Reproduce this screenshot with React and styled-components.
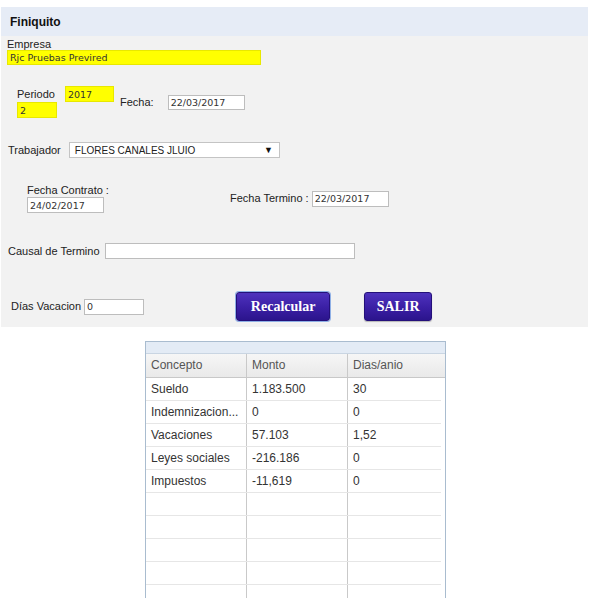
import React from "react";
import styled, { createGlobalStyle } from "styled-components";

const Global = createGlobalStyle`
  html, body { margin: 0; padding: 0; overflow: hidden; background: #fff; }
  body { font-family: "Liberation Sans", Arial, sans-serif; }
`;

const Page = styled.div`
  padding: 7px 0 0 1px;
  width: 592px;
  height: 598px;
  box-sizing: border-box;
`;

const Panel = styled.div`
  width: 587px;
  background: #f2f2f2;
  padding-bottom: 6px;
  font-size: 11px;
  color: #222;
`;

const Header = styled.div`
  height: 29px;
  display: flex;
  align-items: center;
  padding-left: 9px;
  background: #e6ecf6;
  font-weight: bold;
  font-size: 12px;
  color: #111;
`;

const Label = styled.span`
  font-size: 11px;
  line-height: ${(p) => p.$lh || 13}px;
  color: #222;
  white-space: nowrap;
  margin-left: ${(p) => p.$ml || 0}px;
  margin-right: ${(p) => p.$mr || 0}px;
  display: block;
`;

const Field = styled.input`
  box-sizing: border-box;
  width: ${(p) => p.$w}px;
  height: ${(p) => p.$h || 15}px;
  margin: 0;
  padding: 0 2px;
  border: 1px solid ${(p) => (p.$yellow ? "#e8e800" : "#bdbdbd")};
  background: ${(p) => (p.$yellow ? "#ffff00" : "#fff")};
  font-family: "DejaVu Sans", Verdana, sans-serif;
  font-size: 9.5px;
  color: #333;
  outline: none;
  display: block;
  flex: none;
`;

const EmpresaBlock = styled.div`
  margin: 2px 0 0 6px;
`;

const Row = styled.div`
  display: flex;
  align-items: center;
  margin-top: ${(p) => p.$mt || 0}px;
  padding-left: ${(p) => p.$pl || 0}px;
`;

const PeriodoBox = styled.div`
  display: flex;
  flex-direction: column;
  width: 98px;
  margin-right: 5px;
`;

const Line = styled.div`
  display: flex;
  align-items: center;
  gap: ${(p) => p.$gap || 0}px;
`;

const Select = styled.div`
  box-sizing: border-box;
  width: 211px;
  height: 16px;
  border: 1px solid #c4c4c4;
  background: #fff;
  display: flex;
  align-items: center;
  justify-content: space-between;
  padding: 0 6px 0 5px;
  font-size: 10px;
  color: #222;
`;

const Arrow = styled.span`
  font-size: 9px;
  color: #111;
`;

const ContratoBox = styled.div`
  width: 203px;
  display: flex;
  flex-direction: column;
`;

const Button = styled.button`
  box-sizing: border-box;
  height: 29px;
  width: ${(p) => p.$w}px;
  margin-left: ${(p) => p.$ml || 0}px;
  border: 1px solid #24107a;
  border-radius: 3px;
  background: linear-gradient(#4e32bd, #3a1fa4 55%, #2b148c);
  color: #fff;
  font-family: "Liberation Serif", Georgia, serif;
  font-weight: bold;
  font-size: 14px;
  padding: 0;
  cursor: pointer;
  box-shadow: ${(p) => (p.$focus ? "0 0 0 1px #8fb0e6" : "0 1px 1px rgba(0,0,0,0.25)")};
`;

const Grid = styled.div`
  margin: 14px 0 0 144px;
  width: 301px;
  box-sizing: border-box;
  border: 1px solid #a9bccf;
  border-bottom: none;
  background: #fff;
  font-size: 12px;
  color: #333;
`;

const TopStrip = styled.div`
  height: 11px;
  background: #e3ebf5;
  border-bottom: 1px solid #c9d5e2;
`;

const HeadRow = styled.div`
  display: grid;
  grid-template-columns: 101px 101px 1fr;
  height: 24px;
  box-sizing: border-box;
  background: linear-gradient(#f6f6f6, #e9e9e9);
  border-bottom: 1px solid #c8c8c8;
  color: #555;
`;

const Cell = styled.div`
  display: block;
  line-height: 22px;
  padding-left: 5px;
  border-right: ${(p) => (p.$last ? "none" : "1px solid #c9c9c9")};
  white-space: nowrap;
  overflow: hidden;
  min-width: 0;
`;

const Body = styled.div`
  width: 295px;
`;

const DataRow = styled.div`
  display: grid;
  grid-template-columns: 101px 101px 1fr;
  height: 23px;
  box-sizing: border-box;
  border-bottom: 1px solid #e6e6e6;
`;

const rows = [
  ["Sueldo", "1.183.500", "30"],
  ["Indemnizacion...", "0", "0"],
  ["Vacaciones", "57.103", "1,52"],
  ["Leyes sociales", "-216.186", "0"],
  ["Impuestos", "-11,619", "0"],
  ["", "", ""],
  ["", "", ""],
  ["", "", ""],
  ["", "", ""],
  ["", "", ""],
];

export default function App() {
  return (
    <>
      <Global />
      <Page>
        <Panel>
          <Header>Finiquito</Header>
          <EmpresaBlock>
            <Label $lh={12}>Empresa</Label>
            <Field $w={254} $yellow readOnly value="Rjc Pruebas Previred" />
          </EmpresaBlock>

          <Row $mt={21} $pl={16}>
            <PeriodoBox>
              <Line $gap={10}>
                <Label>Periodo</Label>
                <Field $w={49} $h={16} $yellow readOnly value="2017" />
              </Line>
              <Field $w={40} $h={16} $yellow readOnly value="2" />
            </PeriodoBox>
            <Label $mr={14}>Fecha:</Label>
            <Field $w={77} readOnly value="22/03/2017" />
          </Row>

          <Row $mt={24} $pl={7}>
            <Label $mr={8}>Trabajador</Label>
            <Select>
              <span>FLORES CANALES JLUIO</span>
              <Arrow>▼</Arrow>
            </Select>
          </Row>

          <Row $mt={26} $pl={26}>
            <ContratoBox>
              <Label>Fecha Contrato :</Label>
              <Field $w={77} $h={16} readOnly value="24/02/2017" />
            </ContratoBox>
            <Label $mr={3}>Fecha Termino :</Label>
            <Field $w={77} $h={16} readOnly value="22/03/2017" />
          </Row>

          <Row $mt={30} $pl={7}>
            <Label $mr={5}>Causal de Termino</Label>
            <Field $w={250} $h={16} readOnly value="" />
          </Row>

          <Row $mt={33} $pl={10}>
            <Label $mr={3}>Días Vacacion</Label>
            <Field $w={60} $h={16} readOnly value="0" />
            <Button $w={94} $ml={92} $focus>Recalcular</Button>
            <Button $w={68} $ml={34}>SALIR</Button>
          </Row>
        </Panel>

        <Grid>
          <TopStrip />
          <HeadRow>
            <Cell>Concepto</Cell>
            <Cell>Monto</Cell>
            <Cell $last>Dias/anio</Cell>
          </HeadRow>
          <Body>
            {rows.map((r, i) => (
              <DataRow key={i}>
                <Cell>{r[0]}</Cell>
                <Cell>{r[1]}</Cell>
                <Cell $last>{r[2]}</Cell>
              </DataRow>
            ))}
          </Body>
        </Grid>
      </Page>
    </>
  );
}
